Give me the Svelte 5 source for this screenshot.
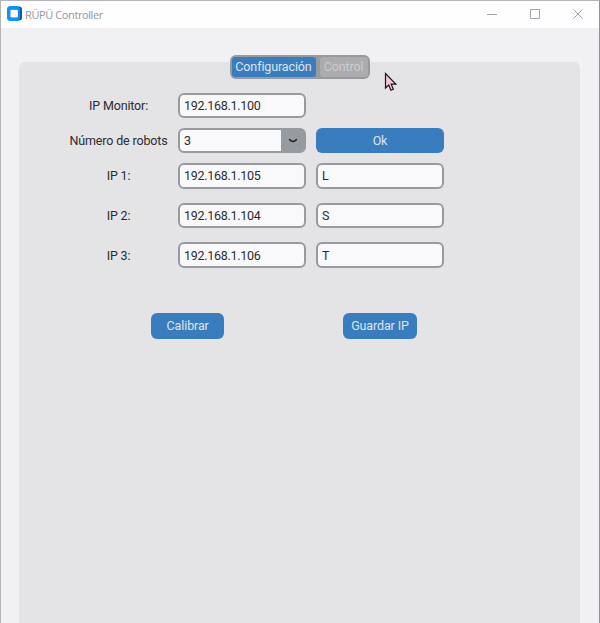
<script>
  const robots = [
    { label: 'IP 1:', ip: '192.168.1.105', name: 'L' },
    { label: 'IP 2:', ip: '192.168.1.104', name: 'S' },
    { label: 'IP 3:', ip: '192.168.1.106', name: 'T' }
  ];
</script>

<div class="window">
  <header>
    <svg class="logo" width="15" height="15" viewBox="0 0 15 15">
      <rect x="4" y="0.5" width="11" height="14" rx="3" fill="#0b57a0" />
      <rect x="0" y="0" width="13" height="15" rx="3.5" fill="#0b94f5" />
      <rect x="3" y="3.5" width="8.5" height="8.5" rx="2" fill="#0869c4" />
      <rect x="3.4" y="3.8" width="7.6" height="7.8" rx="1.4" fill="#fff" />
    </svg>
    <span class="title">RÜPÜ Controller</span>
    <div class="controls">
      <svg width="10" height="10" viewBox="0 0 10 10"><path d="M0 5.5h10" /></svg>
      <svg width="10" height="10" viewBox="0 0 10 10"><path d="M.5.5h9v9h-9z" /></svg>
      <svg width="10" height="10" viewBox="0 0 10 10"><path d="M.5.5l9 9M9.5.5l-9 9" /></svg>
    </div>
  </header>

  <main>
    <nav>
      <button class="tab active">Configuración</button>
      <button class="tab">Control</button>
    </nav>

    <section>
      <div class="row first">
        <span class="label">IP Monitor:</span>
        <div class="field">192.168.1.100</div>
      </div>
      <div class="row second">
        <span class="label">Número de robots</span>
        <div class="field select">
          <span>3</span>
          <div class="arrow">
            <svg width="10" height="6" viewBox="0 0 10 6"><path d="M1.5 1.5q3.5 4.2 7 0" /></svg>
          </div>
        </div>
        <button class="primary ok">Ok</button>
      </div>
      {#each robots as robot}
        <div class="row robot">
          <span class="label">{robot.label}</span>
          <div class="field">{robot.ip}</div>
          <div class="field">{robot.name}</div>
        </div>
      {/each}
      <div class="actions">
        <button class="primary">Calibrar</button>
        <button class="primary">Guardar IP</button>
      </div>
    </section>
  </main>

  <svg class="cursor" width="13" height="20" viewBox="0 0 13 20">
    <path d="M1.5 1.5v14.5l3.2-3 2.2 5.2 2.4-1-2.1-5h4.6z" fill="#f9c6d6" stroke="#1c1418" stroke-width="1.2" />
  </svg>
</div>

<style>
  :global(body) { margin: 0; overflow: hidden; }
  .window {
    box-sizing: border-box;
    position: relative;
    width: 600px;
    height: 623px;
    overflow: hidden;
    display: flex;
    flex-direction: column;
    background: #f1f0f3;
    border: 1px solid #b4b3b8;
    border-right-color: #8f9297;
    border-bottom: 0;
    font-family: Roboto, sans-serif;
    font-size: 12.5px;
    letter-spacing: -0.15px;
    color: #2c2c30;
  }
  header {
    height: 27px;
    flex: none;
    display: flex;
    align-items: center;
    background: #fefdff;
    padding: 0 16px 0 6px;
  }
  .logo { margin-top: -2px; }
  .title {
    margin: -1px auto 0 3px;
    font-family: "Open Sans", "Noto Sans", sans-serif;
    font-size: 11px;
    letter-spacing: -0.4px;
    color: #98979d;
  }
  .controls { display: flex; gap: 33px; margin-top: -2px; }
  .controls svg { fill: none; stroke: #a4a3a8; stroke-width: 1; }
  main {
    flex: 1;
    display: flex;
    flex-direction: column;
    align-items: center;
    padding: 27px 19px 0 18px;
  }
  nav {
    box-sizing: border-box;
    z-index: 1;
    display: flex;
    gap: 4px;
    height: 24px;
    width: 140px;
    padding: 2px;
    border-radius: 6px;
    background: #979b9f;
  }
  button {
    border: 0;
    padding: 0;
    font: inherit;
    letter-spacing: -0.12px;
    color: #dce4ee;
    white-space: nowrap;
  }
  .tab { flex: 1; border-radius: 3px; background: #acacaf; color: #cbcbce; line-height: 18px; padding-bottom: 1px; }
  .tab.active { flex: 0 0 84px; background: #3a7dbf; color: #dce4ee; }
  section {
    box-sizing: border-box;
    width: 561px;
    flex: 1;
    margin-top: -17px;
    padding: 30.5px 0 0 41px;
    border-radius: 6px 6px 0 0;
    background: #e4e3e6;
  }
  .row {
    display: grid;
    grid-template-columns: 108px 128px 128px;
    column-gap: 10px;
    height: 25.5px;
    margin-bottom: 14.2px;
    align-items: stretch;
  }
  .first,
  .second { margin-bottom: 9.8px; }
  .label {
    align-self: center;
    text-align: center;
    white-space: nowrap;
    padding-left: 9px;
  }
  .field {
    box-sizing: border-box;
    display: flex;
    align-items: center;
    padding: 0 4px;
    border: 2px solid #979b9f;
    border-radius: 6px;
    background: #f9f8fb;
    letter-spacing: -0.27px;
  }
  .select { justify-content: space-between; padding: 0 0 0 4px; }
  .arrow {
    width: 23px;
    align-self: stretch;
    display: flex;
    align-items: center;
    justify-content: center;
    background: #979b9f;
  }
  .arrow path { fill: none; stroke: #242426; stroke-width: 1.5; stroke-linecap: round; }
  .primary { border-radius: 6px; background: #3a7dbf; }
  .actions { display: flex; gap: 119px; padding: 31px 0 0 91px; }
  .actions .primary { width: 73.3px; height: 25.5px; }
  .cursor { position: absolute; left: 383px; top: 71px; }
</style>
